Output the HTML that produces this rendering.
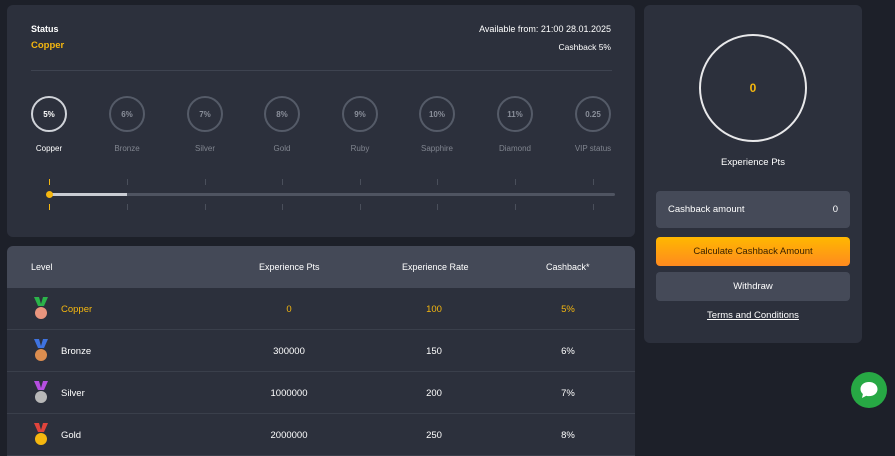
<!DOCTYPE html>
<html><head><meta charset="utf-8"><style>
*{margin:0;padding:0;box-sizing:border-box}
body{width:895px;height:453px;background:#1d2029;font-family:"Liberation Sans",sans-serif;position:relative;overflow:hidden;color:#fff}
.a{position:absolute}
.p{background:#2c303c;border-radius:6px}
.c{position:absolute;width:36px;height:36px;border:2px solid #555b68;border-radius:50%;font-size:8px;font-weight:bold;color:#8a8f9a;display:flex;align-items:center;justify-content:center}
.l{position:absolute;font-size:8px;color:#80858f;width:80px;text-align:center}
.t{position:absolute;width:1px;height:6px;background:#4a4f5b}
.row{position:absolute;left:7px;width:628px;height:42px;background:#2c303c;font-size:9.5px;border-bottom:1px solid #3a3f4b}
.row span{position:absolute;top:16px}
.row span.x{transform:translateX(-50%)}
.m{position:absolute;left:25px;top:9px}
</style></head><body>
<div class="a p" style="left:7px;top:5px;width:628px;height:232px"></div>
<div class="a" style="left:31px;top:24px;font-size:9px;font-weight:bold">Status</div>
<div class="a" style="left:31px;top:40px;font-size:9.5px;font-weight:bold;color:#f5b70f">Copper</div>
<div class="a" style="right:284px;top:24px;font-size:9px">Available from: 21:00 28.01.2025</div>
<div class="a" style="right:284px;top:42px;font-size:8.5px">Cashback 5%</div>
<div class="a" style="left:31px;top:70px;width:581px;height:1px;background:#3e4350"></div>

<div class="c" style="left:31px;top:96px;border-color:#d0d3d9;color:#fff">5%</div><div class="l" style="left:9px;top:144px;color:#fff">Copper</div>
<div class="c" style="left:109px;top:96px">6%</div><div class="l" style="left:87px;top:144px">Bronze</div>
<div class="c" style="left:187px;top:96px">7%</div><div class="l" style="left:165px;top:144px">Silver</div>
<div class="c" style="left:264px;top:96px">8%</div><div class="l" style="left:242px;top:144px">Gold</div>
<div class="c" style="left:342px;top:96px">9%</div><div class="l" style="left:320px;top:144px">Ruby</div>
<div class="c" style="left:419px;top:96px">10%</div><div class="l" style="left:397px;top:144px">Sapphire</div>
<div class="c" style="left:497px;top:96px">11%</div><div class="l" style="left:475px;top:144px">Diamond</div>
<div class="c" style="left:575px;top:96px">0.25</div><div class="l" style="left:553px;top:144px">VIP status</div>

<div class="a" style="left:48px;top:193px;width:567px;height:3px;background:#4f5461;border-radius:2px"></div>
<div class="a" style="left:48px;top:193px;width:79px;height:3px;background:#c9ccd3"></div>
<div class="a" style="left:46px;top:191px;width:7px;height:7px;border-radius:50%;background:#f5b70f"></div>
<div class="t" style="left:49px;top:179px;background:#f5b70f"></div><div class="t" style="left:49px;top:204px;background:#f5b70f"></div>
<div class="t" style="left:127px;top:179px"></div><div class="t" style="left:127px;top:204px"></div>
<div class="t" style="left:205px;top:179px"></div><div class="t" style="left:205px;top:204px"></div>
<div class="t" style="left:282px;top:179px"></div><div class="t" style="left:282px;top:204px"></div>
<div class="t" style="left:360px;top:179px"></div><div class="t" style="left:360px;top:204px"></div>
<div class="t" style="left:437px;top:179px"></div><div class="t" style="left:437px;top:204px"></div>
<div class="t" style="left:515px;top:179px"></div><div class="t" style="left:515px;top:204px"></div>
<div class="t" style="left:593px;top:179px"></div><div class="t" style="left:593px;top:204px"></div>

<div class="a" style="left:7px;top:246px;width:628px;height:42px;background:#444957;border-radius:6px 6px 0 0;font-size:9px">
<span class="a" style="left:24px;top:16px">Level</span>
<span class="a" style="left:252px;top:16px">Experience Pts</span>
<span class="a" style="left:395px;top:16px">Experience Rate</span>
<span class="a" style="left:539px;top:16px">Cashback*</span></div>

<div class="row" style="top:288px;color:#f5b70f"><svg class="m" width="18" height="24" viewBox="0 0 18 24"><path d="M2 0h5l2 7 2-7h5l-4 9H6z" fill="#2bb34a"/><circle cx="9" cy="16" r="6" fill="#e9957e"/></svg><span style="left:54px">Copper</span><span class="x" style="left:282px">0</span><span class="x" style="left:427px">100</span><span class="x" style="left:561px">5%</span></div>
<div class="row" style="top:330px"><svg class="m" width="18" height="24" viewBox="0 0 18 24"><path d="M2 0h5l2 7 2-7h5l-4 9H6z" fill="#3f73e0"/><circle cx="9" cy="16" r="6" fill="#dc8d4f"/></svg><span style="left:54px">Bronze</span><span class="x" style="left:282px">300000</span><span class="x" style="left:427px">150</span><span class="x" style="left:561px">6%</span></div>
<div class="row" style="top:372px"><svg class="m" width="18" height="24" viewBox="0 0 18 24"><path d="M2 0h5l2 7 2-7h5l-4 9H6z" fill="#b54ee0"/><circle cx="9" cy="16" r="6" fill="#b8b8b8"/></svg><span style="left:54px">Silver</span><span class="x" style="left:282px">1000000</span><span class="x" style="left:427px">200</span><span class="x" style="left:561px">7%</span></div>
<div class="row" style="top:414px"><svg class="m" width="18" height="24" viewBox="0 0 18 24"><path d="M2 0h5l2 7 2-7h5l-4 9H6z" fill="#e0443c"/><circle cx="9" cy="16" r="6" fill="#f5b70f"/></svg><span style="left:54px">Gold</span><span class="x" style="left:282px">2000000</span><span class="x" style="left:427px">250</span><span class="x" style="left:561px">8%</span></div>

<div class="a p" style="left:644px;top:5px;width:218px;height:338px"></div>
<div class="a" style="left:699px;top:34px;width:108px;height:108px;border:2px solid #e8e8ea;border-radius:50%;display:flex;align-items:center;justify-content:center;color:#f5b70f;font-weight:bold;font-size:12px">0</div>
<div class="a" style="left:644px;top:157px;width:218px;text-align:center;font-size:9.5px">Experience Pts</div>
<div class="a" style="left:656px;top:191px;width:194px;height:37px;background:#454a58;border-radius:4px;font-size:9.5px"><span class="a" style="left:12px;top:13px">Cashback amount</span><span class="a" style="right:12px;top:13px">0</span></div>
<div class="a" style="left:656px;top:237px;width:194px;height:29px;background:linear-gradient(#ffb800,#ff8a1f);border-radius:4px;font-size:9.5px;color:#3a2200;text-align:center;line-height:29px">Calculate Cashback Amount</div>
<div class="a" style="left:656px;top:272px;width:194px;height:29px;background:#454a58;border-radius:4px;font-size:9.5px;text-align:center;line-height:29px">Withdraw</div>
<div class="a" style="left:644px;top:310px;width:218px;text-align:center;font-size:9.5px;text-decoration:underline">Terms and Conditions</div>
<div class="a" style="left:851px;top:372px;width:36px;height:36px;border-radius:50%;background:#27a844;display:flex;align-items:center;justify-content:center"><svg width="20" height="18" viewBox="0 0 20 18"><path d="M10 1C5 1 1.5 4 1.5 8c0 2 .9 3.7 2.4 5L3 17l4.3-2.3c.9.3 1.8.4 2.7.4 5 0 8.5-3 8.5-7S15 1 10 1z" fill="#fff"/></svg></div>
</body></html>
